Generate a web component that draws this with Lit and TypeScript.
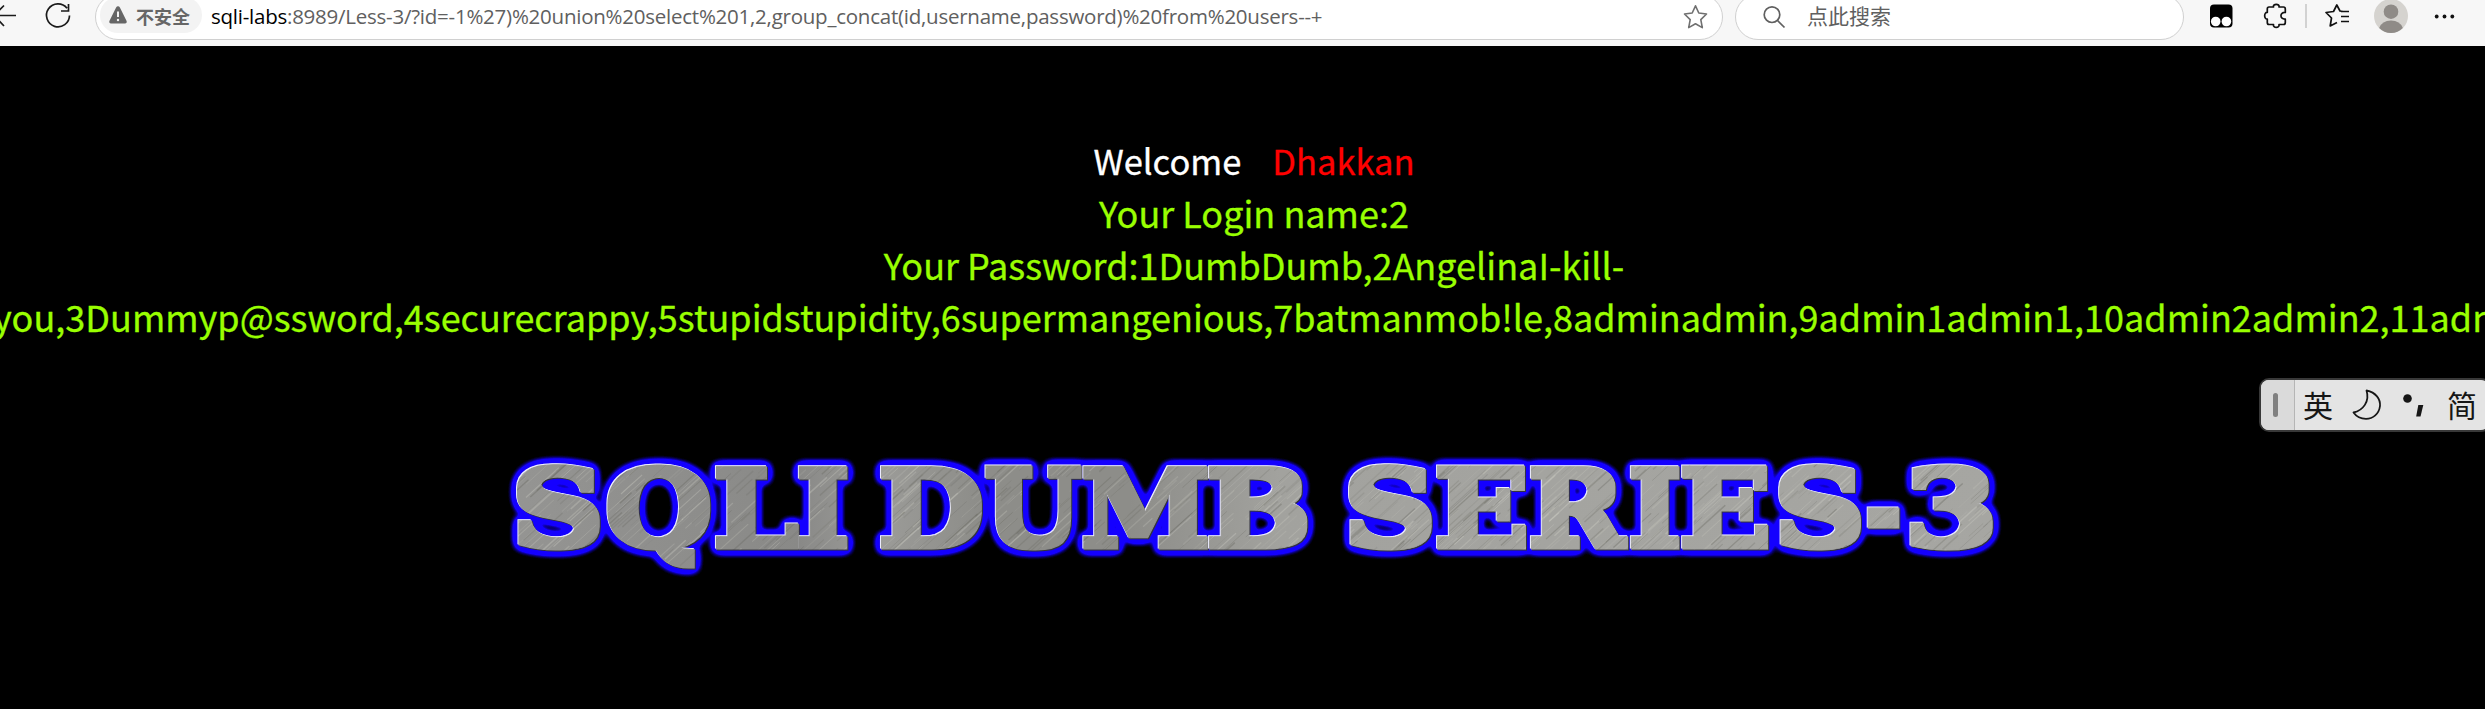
import { LitElement, html, svg, css } from "lit";
import { customElement } from "lit/decorators.js";

/** Each glyph of the banner with its horizontal ink extents in banner units. */
const GLYPHS: [string, number, number][] = [
  ["S", 516, 600], ["Q", 607, 711], ["L", 715, 799], ["I", 798, 848],
  ["D", 880, 983], ["U", 985, 1082], ["M", 1083, 1208], ["B", 1208, 1308],
  ["S", 1348, 1432], ["E", 1436, 1526], ["R", 1530, 1629], ["I", 1630, 1680],
  ["E", 1681, 1768], ["S", 1778, 1861], ["-", 1867, 1900], ["3", 1910, 1993],
];
const BANNER_FONT = 'bold 105.5px "DejaVu Serif"';
const GROWTH = 5;

@customElement("banner-title")
class BannerTitle extends LitElement {
  static styles = css`
    :host { display: block; }
    svg { display: block; }
    text { font: bold 105.5px "DejaVu Serif", serif; fill: #fff; stroke: #fff; stroke-width: 1; }
  `;

  private letters() {
    const ctx = document.createElement("canvas").getContext("2d")!;
    ctx.font = BANNER_FONT;
    return GLYPHS.map(([ch, x0, x1]) => {
      const m = ctx.measureText(ch);
      const ink = m.actualBoundingBoxRight + m.actualBoundingBoxLeft;
      const sx = (x1 - x0 - GROWTH) / ink;
      const tx = x0 + GROWTH / 2 + m.actualBoundingBoxLeft * sx;
      return svg`<text vector-effect="non-scaling-stroke" transform="translate(${tx} 545.5) scale(${sx} 1)">${ch}</text>`;
    });
  }

  private brush() {
    let seed = 7;
    const rnd = () => (seed = (seed * 16807) % 2147483647) / 2147483647;
    return Array.from({ length: 1100 }, () => {
      const x = 430 + rnd() * 1640, y = 450 + rnd() * 125, len = 12 + rnd() * 50;
      const tone = rnd() > 0.5 ? "#cfcfc6" : "#66665e";
      return svg`<line x1=${x} y1=${y} x2=${x + len * 0.74} y2=${y - len * 0.67}
        stroke=${tone} stroke-opacity=${0.1 + rnd() * 0.28} stroke-width=${0.6 + rnd() * 1}></line>`;
    });
  }

  render() {
    return html`<svg width="1560" height="160" viewBox="470 430 1560 160">
      <defs>
        <filter id="slab" filterUnits="userSpaceOnUse" x="470" y="430" width="1560" height="160">
          <feMorphology operator="dilate" radius="2 3"/>
        </filter>
        <filter id="bevel" filterUnits="userSpaceOnUse" x="470" y="430" width="1560" height="160" color-interpolation-filters="sRGB">
          <feMorphology in="SourceAlpha" operator="dilate" radius="2 3" result="shape"/>
          <feGaussianBlur in="shape" stdDeviation="4.8" result="spread"/>
          <feComponentTransfer in="spread" result="aura"><feFuncA type="linear" slope="10" intercept="-.15"/></feComponentTransfer>
          <feFlood flood-color="#1400ff"/><feComposite in2="aura" operator="in" result="glow"/>
          <feOffset in="shape" dx="1" dy="1" result="low"/>
          <feFlood flood-color="#34343c"/><feComposite in2="low" operator="in" result="dark"/>
          <feOffset in="shape" dx="-1.200" dy="-1.200" result="high"/>
          <feFlood flood-color="#eeeeff"/><feComposite in2="high" operator="in" result="light"/>
          <feMerge><feMergeNode in="glow"/><feMergeNode in="dark"/><feMergeNode in="light"/></feMerge>
        </filter>
        <linearGradient id="steel" x1="500" x2="2000" y1="0" y2="0" gradientUnits="userSpaceOnUse">
          <stop offset="0" stop-color="#959593"/><stop offset=".2" stop-color="#898987"/>
          <stop offset=".25" stop-color="#9c9c99"/><stop offset=".32" stop-color="#8d8d89"/>
          <stop offset=".42" stop-color="#8d8d89"/><stop offset=".52" stop-color="#a2a29e"/>
          <stop offset=".7" stop-color="#a4a4a0"/><stop offset="1" stop-color="#a6a6a2"/>
        </linearGradient>
        <mask id="cut" maskUnits="userSpaceOnUse" x="470" y="430" width="1560" height="160">
          <g filter="url(#slab)">${this.letters()}</g>
        </mask>
      </defs>
      <g filter="url(#bevel)">${this.letters()}</g>
      <g mask="url(#cut)">
        <rect x="470" y="430" width="1560" height="160" fill="url(#steel)"/>
        ${this.brush()}
      </g>
    </svg>`;
  }
}

@customElement("browser-bar")
class BrowserBar extends LitElement {
  static styles = css`
    :host { display: block; height: 46px; overflow: hidden; background: #f7f7f7;
      font-family: "Open Sans", "Noto Sans CJK SC", sans-serif; }
    .bar { display: flex; height: 46px; align-items: flex-start; }
    svg { display: block; flex: none; }
    .nav { width: 95px; height: 46px; }
    .field { box-sizing: border-box; height: 46px; margin-top: -6px; border: 1.5px solid #d0d0d0;
      border-radius: 23px; background: #fff; display: flex; align-items: center; }
    .address { width: 1628px; padding: 0 14px 0 4px; }
    .pill { box-sizing: border-box; width: 102px; height: 36px; border-radius: 18px; background: #f3f3f3;
      display: flex; align-items: center; gap: 8px; padding-left: 8px; margin-top: -4px;
      font: bold 18px/36px "Noto Sans CJK SC", sans-serif; color: #666; white-space: nowrap; }
    .pill span { margin-top: 1px; }
    .url { margin: -2px 0 0 9px; font-size: 20.5px; line-height: 30px; letter-spacing: -0.24px; color: #606060; white-space: nowrap; flex: 1; }
    .host { color: #000; }
    .search { width: 449px; margin-left: 12px; padding-left: 26px; gap: 20px; }
    .hint { font: 21px/30px "Noto Sans CJK SC", sans-serif; color: #606060; margin-top: -4px; }
    .tools { width: 300px; height: 46px; }
  `;
  render() {
    return html`<div class="bar">
      <svg class="nav" viewBox="0 0 95 46" fill="none" stroke="#1b1b1b" stroke-width="1.7">
        <path d="M-6 15.5H16M4 5.5L-6 15.5L4 26"/>
        <path d="M67 8.2A11.5 11.5 0 1 0 69.5 15.500M68.500 4V11H61"/>
      </svg>
      <div class="field address">
        <div class="pill">
          <svg width="20" height="20" viewBox="0 0 20 20"><path d="M10 1.2Q11.2 1.2 11.9 2.6L18.6 16Q19.2 18.3 17 18.5H3Q.8 18.3 1.4 16L8.1 2.6Q8.8 1.2 10 1.2Z" fill="#666"/><path d="M10 6.5V12" stroke="#f3f3f3" stroke-width="2"/><circle cx="10" cy="15" r="1.2" fill="#f3f3f3"/></svg>
          <span>不安全</span>
        </div>
        <div class="url"><span class="host">sqli-labs</span>:8989/Less-3/?id=-1%27)%20union%20select%201,2,group_concat(id,username,password)%20from%20users--+</div>
        <svg width="25" height="26" viewBox="0 0 25 26" fill="none" stroke="#707070" stroke-width="1.6" stroke-linejoin="round"><path d="M12.5 1.8L15.8 9L23.5 10L17.8 15.6L19.3 23.6L12.5 19.8L5.7 23.6L7.2 15.6L1.5 10L9.2 9Z"/></svg>
      </div>
      <div class="field search">
        <svg width="25" height="25" viewBox="0 0 25 25" fill="none" stroke="#606060" stroke-width="1.7"><circle cx="10" cy="9.7" r="7.8"/><path d="M15.5 15.5L22.5 22.5"/></svg>
        <span class="hint">点此搜索</span>
      </div>
      <svg class="tools" viewBox="2184 0 300 46" fill="none" stroke="#111" stroke-width="1.7" stroke-linejoin="round">
        <rect x="2210" y="4.500" width="22.500" height="23" rx="4" fill="#000" stroke="none"/>
        <circle cx="2215.700" cy="21.500" r="4.800" fill="#fff" stroke="none"/><circle cx="2226.400" cy="21.500" r="4.800" fill="#fff" stroke="none"/>
        <path d="M2269 7H2273.500C2272.500 3.500 2280 3.500 2279 7H2283.500Q2285.300 7 2285.300 9V12.500C2279.500 12 2279.500 19.500 2285.300 19V22.500Q2285.300 24.500 2283.500 24.500H2279C2280 28.300 2272.500 28.300 2273.500 24.500H2269Q2267.300 24.500 2267.300 22.500V19C2263.800 19.500 2263.800 12 2267.300 12.500V9Q2267.300 7 2269 7Z"/>
        <path d="M2306 4V28" stroke="#ccc"/>
        <path d="M2343 11.500L2340 11L2336.800 5L2333.500 11.500L2326 12.500L2331.500 18L2330.200 26L2337 22.500M2341 11.500H2349M2341 16.500H2349M2341 21.500H2349"/>
        <circle cx="2391" cy="16" r="17" fill="#d5d3cf" stroke="none"/>
        <circle cx="2391" cy="11.700" r="7.300" fill="#8f8b87" stroke="none"/>
        <path d="M2379.200 28Q2382 20.500 2391 20.500T2402.800 28Q2398 33 2391 33T2379.200 28Z" fill="#8f8b87" stroke="none"/>
        <g fill="#111" stroke="none"><circle cx="2436.700" cy="16.500" r="1.900"/><circle cx="2444.500" cy="16.500" r="1.900"/><circle cx="2452.300" cy="16.500" r="1.900"/></g>
      </svg>
    </div>`;
  }
}

@customElement("ime-bar")
class ImeBar extends LitElement {
  static styles = css`
    :host { box-sizing: border-box; display: flex; width: 232px; height: 54px; border: 2px solid #383838;
      border-radius: 10px; background: #e4e4e4; color: #161616; overflow: hidden;
      font: 30px/50px "Noto Sans CJK SC", sans-serif; }
    .grip { box-sizing: border-box; width: 34px; flex: none; background: #dadada; border-right: 1.5px solid #b5b5b5;
      display: flex; align-items: center; padding-left: 12px; }
    .grip i { width: 5px; height: 24px; border-radius: 3px; background: #808080; }
    .word { width: 30px; height: 50px; margin-left: 8px; margin-top: -1px; flex: none; }
    svg { display: block; flex: none; }
  `;
  render() {
    return html`<div class="grip"><i></i></div><span class="word">英</span>
      <svg width="106" height="50" viewBox="2333 380 106 50">
        <path d="M2366.500 390.500C2376 392.500 2380.500 399 2380 406C2379 414 2373 418.800 2366 418.800C2360 418.800 2356 416 2353.500 412.500C2363 410.500 2370 401.500 2366.500 390.500Z" fill="none" stroke="#161616" stroke-width="1.800" stroke-linejoin="round"/>
        <circle cx="2407.500" cy="398.500" r="4.300" fill="#161616"/>
        <path d="M2418.300 405H2423.300L2420.500 416.500H2416.200Z" fill="#161616"/>
      </svg><span class="word">简</span>`;
  }
}

@customElement("app-root")
class AppRoot extends LitElement {
  static styles = css`
    :host { display: block; width: 2485px; height: 709px; overflow: hidden; background: #000; position: relative; }
    .page { display: flex; flex-direction: column; align-items: center; width: 2508px; padding-top: 88px;
      font: 36px/52px "Noto Sans CJK SC", sans-serif; color: #9f0; white-space: pre;
      -webkit-text-stroke: 0.3px currentColor; }
    .welcome { color: #fff; font-size: 34.5px; line-height: 51px; padding-top: 1px; }
    .name { color: #f00; }
    .wide { align-self: flex-start; margin-left: -7px; }
    .title { align-self: flex-start; margin: 88px 0 0 470px; }
    .ime { position: absolute; left: 2259px; top: 378px; }
  `;
  render() {
    return html`<browser-bar></browser-bar>
      <main class="page">
        <div class="welcome">Welcome    <span class="name">Dhakkan</span></div>
        <div>Your Login name:2</div>
        <div>Your Password:1DumbDumb,2AngelinaI-kill-</div>
        <div class="wide">you,3Dummyp@ssword,4securecrappy,5stupidstupidity,6supermangenious,7batmanmob!le,8adminadmin,9admin1admin1,10admin2admin2,11admin3admin3</div>
        <banner-title class="title"></banner-title>
      </main>
      <ime-bar class="ime"></ime-bar>`;
  }
}
